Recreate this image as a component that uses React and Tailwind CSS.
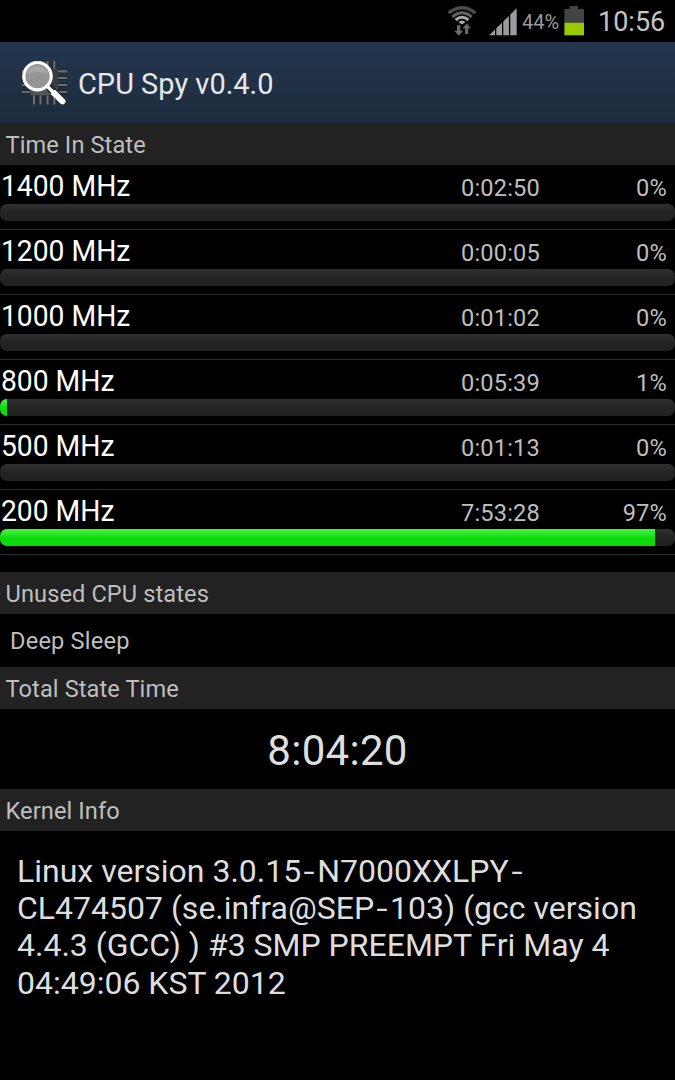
import { Fragment } from 'react';

const STATES = [
  { freq: '1400 MHz', time: '0:02:50', pct: '0%', fill: 0 },
  { freq: '1200 MHz', time: '0:00:05', pct: '0%', fill: 0 },
  { freq: '1000 MHz', time: '0:01:02', pct: '0%', fill: 0 },
  { freq: '800 MHz', time: '0:05:39', pct: '1%', fill: 7 },
  { freq: '500 MHz', time: '0:01:13', pct: '0%', fill: 0 },
  { freq: '200 MHz', time: '7:53:28', pct: '97%', fill: 655 },
];

const KERNEL_LINES = [
  'Linux version 3.0.15-N7000XXLPY-',
  'CL474507 (se.infra@SEP-103) (gcc version',
  '4.4.3 (GCC) ) #3 SMP PREEMPT Fri May 4',
  '04:49:06 KST 2012',
];

function WifiIcon() {
  return (
    <svg className="ml-[447px] h-[42px] w-[30px] shrink-0" viewBox="0 0 30 42" fill="none">
      <path d="M1.6 13Q15 2.4 28.4 13" stroke="#4c4c4c" strokeWidth="3.4" />
      <path d="M5.2 16.8Q15 8.8 24.8 16.8" stroke="#606060" strokeWidth="3" />
      <path d="M8.6 20Q15 14.4 21.4 20" stroke="#a8a8a8" strokeWidth="3" />
      <path d="M11.4 22Q15 19 18.6 22L15 24.6Z" fill="#a8a8a8" />
      <path d="M10 25.2h3.4v5.6h2.8l-4.5 5-4.5-5H10z" fill="#686868" />
      <path d="M18 34v-5.4h-2.6l4.3-5 4.3 5h-2.8V34z" fill="#686868" />
    </svg>
  );
}

function SignalIcon() {
  return (
    <svg className="ml-[12px] h-[42px] w-[28px] shrink-0" viewBox="0 0 28 42" fill="#9c9c9c">
      <path d="M0 35.3L6 29.5V35.3Z" />
      <path d="M7.3 35.3V28.2L13 22.7V35.3Z" />
      <path d="M14.3 35.3V21.4L19.9 16V35.3Z" />
      <path d="M21.3 35.3V14.6L27.7 8.2V35.3Z" />
    </svg>
  );
}

function BatteryIcon() {
  return (
    <svg className="h-[42px] w-[21px] shrink-0" viewBox="0 0 21 42">
      <path d="M.4 9H5.6V6H14V9H20V23H.4Z" fill="#444" />
      <path d="M.4 22.8H20V35.3H.4Z" fill="#99cc00" />
    </svg>
  );
}

function AppIcon() {
  return (
    <svg className="h-[50px] w-[50px] shrink-0" viewBox="0 0 50 50" fill="none">
      <path
        d="M14 2v43.500M20.5 2v43.500M27.5 2v43.500M34.3 2v43.500M2 12.3h45M2 19h45M2 26h45M2 33h45"
        stroke="#20252b"
        strokeWidth="4"
      />
      <path
        d="M14 2v43.500M20.5 2v43.500M27.5 2v43.500M34.3 2v43.500M2 12.3h45M2 19h45M2 26h45M2 33h45"
        stroke="#6a6c6e"
        strokeWidth="2.2"
      />
      <rect x="10" y="9.5" width="28" height="27" fill="#3c3d3f" />
      <rect x="11" y="28" width="26" height="8" fill="#535456" />
      <path d="M29.500 28.500L43 42" stroke="#25282c" strokeWidth="7.600" strokeLinecap="round" />
      <circle cx="17.500" cy="17.200" r="13.700" fill="#939597" stroke="#fff" strokeWidth="3.200" />
      <path d="M6.500 15.200a11.500 11.500 0 0 1 22 0q-10-4-22 0z" fill="#b2b4b5" opacity=".55" />
      <path d="M27 27L35 35" stroke="#fff" strokeWidth="3.400" />
      <path d="M34 34L42.500 42.300" stroke="#fff" strokeWidth="6" strokeLinecap="round" />
    </svg>
  );
}

function SectionHeader({ children }) {
  return (
    <h2 className="h-[42px] bg-[#222] pl-[5.500px] text-[23.6px] leading-[45px] tracking-[0.1px] text-[#bebebe]">
      {children}
    </h2>
  );
}

function StateRow({ state }) {
  return (
    <li className="flex h-[65px] flex-col">
      <div className="flex h-[39px] items-baseline whitespace-nowrap">
        <span className="w-[400px] shrink-0 origin-left scale-x-[0.942] pl-px text-[30px] leading-[41px] text-white">
          {state.freq}
        </span>
        <span className="w-[140px] shrink-0 text-right text-[23.6px] tracking-[0.18px] text-[#bebebe]">
          {state.time}
        </span>
        <span className="w-[127px] shrink-0 text-right text-[23.6px] tracking-[0.18px] text-[#bebebe]">
          {state.pct}
        </span>
      </div>
      <div className="h-[17px] overflow-hidden rounded-[7px] bg-linear-to-b from-[#303030] via-[#232323] to-[#222]">
        <div
          className="h-full bg-linear-to-b from-[#3cf53c] from-5% via-[#0edb0e] via-50% to-[#0cda0c]"
          style={{ width: state.fill }}
        />
      </div>
      <div className="mt-[8px] h-[1.500px] bg-[#2c2c2c]" />
    </li>
  );
}

function KernelLine({ text }) {
  return (
    <p>
      {text.split('-').map((part, i) => (
        <Fragment key={i}>
          {i > 0 && <span className="inline-block w-[16px] scale-x-125 text-center">-</span>}
          {part}
        </Fragment>
      ))}
    </p>
  );
}

export default function App() {
  return (
    <div className="flex h-[1080px] w-[675px] flex-col overflow-hidden bg-black font-['Roboto',sans-serif]">
      <div className="flex h-[42px] shrink-0 items-start whitespace-nowrap">
        <WifiIcon />
        <SignalIcon />
        <span className="ml-[5px] w-[42px] text-[20px] leading-[44px] text-[#999]">44%</span>
        <BatteryIcon />
        <span className="ml-[13px] text-[27px] leading-[45px] text-[#c4c4c4]">10:56</span>
      </div>
      <header className="flex h-[81px] shrink-0 items-center bg-linear-to-b from-[#24374f] to-[#1d2b3d] pt-[2px] pl-[20px]">
        <AppIcon />
        <h1 className="ml-[8px] origin-left scale-x-[0.966] text-[30px] leading-[40px] text-[#e6e6e6]">
          CPU Spy v0.4.0
        </h1>
      </header>
      <SectionHeader>Time In State</SectionHeader>
      <ul className="h-[407px] shrink-0">
        {STATES.map((s) => (
          <StateRow key={s.freq} state={s} />
        ))}
      </ul>
      <SectionHeader>Unused CPU states</SectionHeader>
      <div className="h-[53px] pl-[10px] text-[23.6px] leading-[55px] tracking-[0.2px] text-[#bebebe]">Deep Sleep</div>
      <SectionHeader>Total State Time</SectionHeader>
      <div className="h-[80px] text-center text-[42px] leading-[84px] tracking-[0.3px] text-[#dedede]">8:04:20</div>
      <SectionHeader>Kernel Info</SectionHeader>
      <div className="pt-[22px] pl-[17px] text-[32px] leading-[37.2px] whitespace-nowrap text-[#dedede]">
        {KERNEL_LINES.map((line) => (
          <KernelLine key={line} text={line} />
        ))}
      </div>
    </div>
  );
}
